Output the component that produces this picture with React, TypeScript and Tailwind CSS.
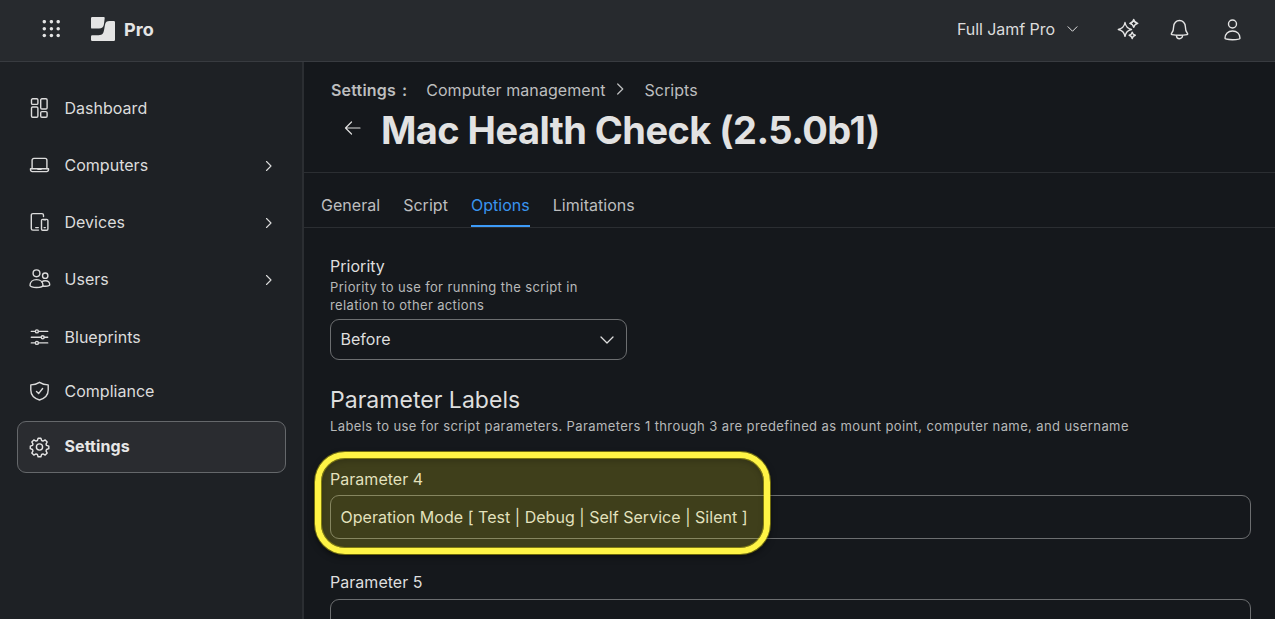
import type { ReactNode } from "react";

type IconProps = { className?: string; children: ReactNode; w?: number; box?: string };

function Icon({ className = "size-5", children, w = 1.4, box = "0.5 0 20 20" }: IconProps) {
  return (
    <svg
      viewBox={box}
      className={`shrink-0 overflow-visible ${className}`}
      fill="none"
      stroke="currentColor"
      strokeWidth={w}
      strokeLinecap="round"
      strokeLinejoin="round"
    >
      {children}
    </svg>
  );
}

const DashboardIcon = () => (
  <Icon>
    <rect x="2" y="0.8" width="6.4" height="5.6" rx="1.2" />
    <rect x="2" y="9" width="6.4" height="10.2" rx="1.2" />
    <rect x="11.2" y="0.8" width="6.4" height="10.2" rx="1.2" />
    <rect x="11.2" y="13.6" width="6.4" height="5.6" rx="1.2" />
  </Icon>
);

const LaptopIcon = () => (
  <Icon>
    <path d="M2.6 13.6V5.2a1.8 1.8 0 0 1 1.8-1.8h11.2a1.8 1.8 0 0 1 1.8 1.8v8.4" />
    <path d="M1 13.8h18v1a1.8 1.8 0 0 1-1.8 1.8H2.8A1.8 1.8 0 0 1 1 14.8z" />
    <path d="M8.4 14.2h3.2" />
  </Icon>
);

const DevicesIcon = () => (
  <Icon>
    <path d="M9 18.1H3.4a1.6 1.6 0 0 1-1.6-1.6V3.2A1.6 1.6 0 0 1 3.4 1.6H12.4A1.6 1.6 0 0 1 14 3.2V4.6" />
    <rect x="12" y="7.4" width="6.4" height="10.8" rx="1.2" />
    <path d="M6.2 15.6h2.600M14.600 15.600h1.200M14.200 7.800h2" />
  </Icon>
);

const UsersIcon = () => (
  <Icon className="-mx-px mt-px size-[22px]" box="0.5 -0.3 22 22">
    <circle cx="8" cy="5" r="3.4" />
    <path d="M1.5 17.3C1.5 13.6 4.3 11.3 8 11.3s6.5 2.3 6.5 6c0 .9-2.8 1.9-6.5 1.9s-6.5-1-6.5-1.9z" />
    <circle cx="16.7" cy="7.4" r="2.7" />
    <path d="M13.3 13.6c.9-.8 2.1-1.1 3.4-1.1 2.6 0 4.5 1.600 4.500 4 0 .8-2 1.400-4.500 1.400-.8 0-1.600 0-2.300-.2" />
  </Icon>
);

const SlidersIcon = () => (
  <Icon>
    <path d="M1.800 4.400h4M9 4.400h9.200M1.800 10.200h9.800M14.800 10.200H18.200M1.800 15.900h4M9 15.900h9.200" />
    <circle cx="7.4" cy="4.4" r="1.5" />
    <circle cx="13.2" cy="10.2" r="1.5" />
    <circle cx="7.4" cy="15.9" r="1.5" />
  </Icon>
);

const ShieldIcon = () => (
  <Icon>
    <path d="M10 1.300C7.400 3 4.400 3.900 1.300 3.900V9c0 4.800 3.500 8.400 8.700 10 5.200-1.600 8.700-5.200 8.700-10V3.900C15.600 3.900 12.600 3 10 1.300z" />
    <path d="M7 10.600l2.100 2 4-5.100" />
  </Icon>
);

const GearIcon = () => (
  <Icon>
    <circle cx="10" cy="10" r="3.1" />
    <path d="M8.600 1.200h2.800l.7 2.300 1.400.6 2.200-1.200 2 2-1.200 2.200.5 1.300 2.300.8v2.500l-2.300.8-.5 1.400 1.200 2.200-2 2-2.200-1.200-1.400.6-.7 2.300H8.600l-.7-2.300-1.400-.6-2.200 1.200-2-2 1.200-2.200-.5-1.400-2.200-.8V9.200L3 8.400l.5-1.300-1.200-2.200 2-2 2.200 1.200 1.400-.6z" />
  </Icon>
);

const Right = ({ className = "h-3 w-2" }: { className?: string }) => (
  <Icon className={className} box="0 0 8 12" w={1.1}>
    <path d="M1.500 1.500l4.500 4.500-4.500 4.500" />
  </Icon>
);

const Down = ({ className }: { className: string }) => (
  <Icon className={className} box="0 0 14 8" w={1.3}>
    <path d="M1 1l6 6 6-6" />
  </Icon>
);

function NavItem({ icon, label, size, more }: { icon: ReactNode; label: string; size: string; more?: boolean }) {
  return (
    <a className={`flex items-center pl-[29.500px] pr-[29px] ${size}`}>
      <span className="mr-[15px] flex w-5 justify-center">{icon}</span>
      <span className="flex-1">{label}</span>
      {more && <Right className="mt-0.5 h-3 w-2" />}
    </a>
  );
}

function Header() {
  return (
    <header className="flex h-[62px] shrink-0 items-center border-b border-[#383b40] bg-[#272a2e] pb-[3px] text-[#e4e4e4]">
      <svg viewBox="0 0 18 18" className="ml-[42px] size-[18px]" fill="currentColor">
        {[1.7, 8.7, 15.6].map((y) => [2.3, 9.4, 16.2].map((x) => <circle key={`${x}-${y}`} cx={x} cy={y} r="1.75" />))}
      </svg>
      <svg viewBox="0 0 24 24" className="ml-[31px] size-6" fill="currentColor">
        <path d="M1.200 0H12.700Q13.900 0 13.700 1.200L12.900 7.600Q12.300 11.600 8 11.600H1.200Q0 11.600 0 10.400V1.200Q0 0 1.200 0z" />
        <path d="M1.200 18.300H7.500C12 18.300 12.700 15.500 13.300 11.800L13.900 8.200C14.500 5 16 4.100 18.500 4.100H22.800Q24 4.100 24 5.300V22.800Q24 24 22.800 24H1.200Q0 24 0 22.800V19.500Q0 18.300 1.200 18.300z" />
      </svg>
      <span className="ml-[9px] text-[18px] font-bold tracking-[0.1px]">Pro</span>
      <div className="flex-1" />
      <span className="text-[16px] tracking-[-0.05px] text-[#dcdcdc]">Full Jamf Pro</span>
      <Down className="ml-[12px] h-[6px] w-[11px]" />
      <Icon className="ml-[39px] size-[22px]" box="0 0 22 22" w={1.4}>
        <path d="M8 4.500Q9 10.300 14.500 11.500Q9 12.700 8 18.300Q7 12.700 1.300 11.500Q7 10.300 8 4.500z" />
        <path d="M16.700 1.500Q17.400 4.700 20.800 5.400Q17.400 6.200 16.700 9.400Q16 6.200 12.800 5.400Q16 4.700 16.700 1.500z" />
        <path d="M15.200 14.200Q15.700 16.700 18.300 17.300Q15.700 17.900 15.200 20.500Q14.700 17.900 12.200 17.300Q14.700 16.700 15.200 14.200z" />
      </Icon>
      <Icon className="ml-[30px] mt-px size-[22px]" box="0.5 0 22 22" w={1.4}>
        <path d="M11 1.500a5.800 5.800 0 0 0-5.800 5.800c0 3.700-.8 5.600-2.200 7.100-.4.500-.1 1.100.4 1.200 4.800.9 10.400.9 15.200 0 .5-.1.800-.7.400-1.200-1.400-1.500-2.200-3.400-2.200-7.100A5.800 5.800 0 0 0 11 1.500z" />
        <path d="M8 16.700a3 3 0 0 0 6 0" />
      </Icon>
      <Icon className="ml-[31px] mr-[31px] mt-px size-[22px]" box="0.5 0 22 22" w={1.4}>
        <circle cx="11" cy="5" r="4" />
        <path d="M3.500 19.300C3.500 14.800 6.600 12 11 12s7.500 2.800 7.500 7.300c0 .8-3.200 1.400-7.500 1.400s-7.500-.6-7.500-1.400z" />
      </Icon>
    </header>
  );
}

function Sidebar() {
  return (
    <nav className="w-[304px] shrink-0 border-r-2 border-[#2b2e32] bg-[#1e2125] pt-[17px] text-[16px] tracking-[0.02px] text-[#dcdcdc]">
      <NavItem icon={<DashboardIcon />} label="Dashboard" size="h-[57px]" />
      <NavItem icon={<LaptopIcon />} label="Computers" size="h-[57px]" more />
      <NavItem icon={<DevicesIcon />} label="Devices" size="h-[57px]" more />
      <NavItem icon={<UsersIcon />} label="Users" size="h-[57px]" more />
      <NavItem icon={<SlidersIcon />} label="Blueprints" size="h-[60px]" />
      <NavItem icon={<ShieldIcon />} label="Compliance" size="h-[48px]" />
      <a className="ml-[17px] mt-[6px] flex h-[52px] w-[269px] items-center rounded-[9px] border border-[#65686b] bg-[#2a2c30] pl-[11.500px] font-bold tracking-[0.1px] text-[#e6e6e6]">
        <GearIcon />
        <span className="ml-[15px] pb-[2px]">Settings</span>
      </a>
    </nav>
  );
}

function PageHeading() {
  return (
    <div className="h-[111px] shrink-0 border-b border-[#2b2e32] pt-[16px]">
      <div className="flex h-6 items-center pl-[27px] text-[16px] tracking-[0.060px] text-[#bdbebf]">
        <span className="font-semibold tracking-[0.2px]">Settings</span>
        <span className="ml-[6px] font-semibold">:</span>
        <span className="ml-[19px]">Computer management</span>
        <Right className="ml-[11px] mb-0.5 h-[14px] w-[9px]" />
        <span className="ml-[19px]">Scripts</span>
      </div>
      <div className="flex h-[56px] items-center pl-[40px]">
        <Icon className="mb-[4px] size-[17px] text-[#dedede]" box="0 0 17 17" w={1.2}>
          <path d="M16 8H1.500M7.500 2L1.500 8l6 6" />
        </Icon>
        <h1 className="ml-5 whitespace-nowrap text-[38px] font-bold leading-none tracking-[-0.550px] text-[#e2e2e2]">
          Mac Health Check (2.5.0b1)
        </h1>
      </div>
    </div>
  );
}

function Tabs() {
  return (
    <div className="flex h-[55px] shrink-0 gap-[23px] border-b border-[#2b2e32] pl-[17px] text-[16px] tracking-[0.03px] text-[#bdbebf]">
      <span className="flex items-center pt-[10px]">General</span>
      <span className="flex items-center pt-[10px]">Script</span>
      <span className="flex items-center border-b-2 border-[#3d9bf8] pt-[12px] text-[#3994ee]">Options</span>
      <span className="flex items-center pt-[10px]">Limitations</span>
    </div>
  );
}

export default function App() {
  return (
    <div className="flex h-[619px] w-[1275px] flex-col overflow-hidden bg-[#15181c] font-['Inter',sans-serif]">
      <Header />
      <div className="flex min-h-0 flex-1">
        <Sidebar />
        <main className="flex min-w-0 flex-1 flex-col overflow-hidden">
          <PageHeading />
          <Tabs />
          <div className="flex flex-col pl-[26px] pr-6 pt-[27px] text-[16px] tracking-[0.03px] text-[#dedede]">
            <span className="h-[23px] leading-[23px]">Priority</span>
            <p className="text-[13px] leading-[18px] tracking-[0.360px] text-[#b7b8b9]">
              Priority to use for running the script in
              <br />
              relation to other actions
            </p>
            <div className="mt-[5px] flex h-[41px] w-[297px] shrink-0 items-center justify-between rounded-[9px] border border-[#6c6e70] pl-[9.500px] pr-3">
              <span className="pb-[2px]">Before</span>
              <Down className="h-2 w-[14px]" />
            </div>
            <h2 className="mt-[25px] h-[30px] text-[23px] leading-[30px] tracking-[0.03px]">Parameter Labels</h2>
            <p className="mt-[2px] h-[18px] whitespace-nowrap text-[13px] leading-[18px] tracking-[0.4px] text-[#b7b8b9]">
              Labels to use for script parameters. Parameters 1 through 3 are predefined as mount point, computer name, and
              username
            </p>
            <div className="relative mt-[33px]">
              <div className="h-[27px] leading-[23px]">Parameter 4</div>
              <div className="flex h-[44px] items-center rounded-[9px] border border-[#6c6e70] pl-[9.500px]">
                Operation Mode [ Test | Debug | Self Service | Silent ]
              </div>
              <div className="absolute left-[-15px] top-[-16px] h-[102px] w-[455px] rounded-[30px] border-[6px] border-[#fff445] bg-[rgba(255,244,30,0.18)] bg-clip-padding shadow-[0_0_0_1px_rgba(255,240,0,0.4),0_3px_6px_rgba(0,0,0,0.5),inset_0_0_0_1px_rgba(255,240,0,0.35),inset_0_3px_6px_rgba(0,0,0,0.2)]" />
            </div>
            <div className="mt-8 h-[28px] leading-[23px]">Parameter 5</div>
            <div className="h-[44px] rounded-[9px] border border-[#6c6e70]" />
          </div>
        </main>
      </div>
    </div>
  );
}
